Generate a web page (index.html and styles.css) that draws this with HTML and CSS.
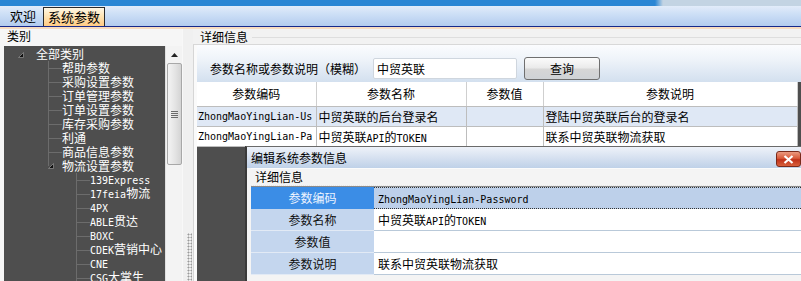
FILE: index.html
```html
<!DOCTYPE html>
<html lang="zh-CN">
<head>
<meta charset="utf-8">
<title>系统参数</title>
<link rel="stylesheet" href="styles.css">
</head>
<body>
<div class="app">
  <div class="top">
    <div class="strip"></div>
    <div class="tabs">
      <div class="tab">欢迎</div>
      <div class="tab active">系统参数</div>
    </div>
  </div>
  <div class="main">
    <div class="left">
      <div class="plabel">类别</div>
      <div class="treebox">
        <div class="tree">
          <div class="row root"><span class="exp"><svg width="6" height="6" viewBox="0 0 6 6"><path d="M5.5 0.5 L5.5 5.5 L0.5 5.5 Z" fill="#111" stroke="#8a8a8a" stroke-width="0.8"/></svg></span><span class="txt">全部类别</span></div>
          <div class="row l1"><span class="conn"></span><span class="txt">帮助参数</span></div>
          <div class="row l1"><span class="conn"></span><span class="txt">采购设置参数</span></div>
          <div class="row l1"><span class="conn"></span><span class="txt">订单管理参数</span></div>
          <div class="row l1"><span class="conn"></span><span class="txt">订单设置参数</span></div>
          <div class="row l1"><span class="conn"></span><span class="txt">库存采购参数</span></div>
          <div class="row l1"><span class="conn"></span><span class="txt">利通</span></div>
          <div class="row l1"><span class="conn"></span><span class="txt">商品信息参数</span></div>
          <div class="row l1"><span class="conn last"><svg width="6" height="6" viewBox="0 0 6 6"><path d="M5.5 0.5 L5.5 5.5 L0.5 5.5 Z" fill="#111" stroke="#8a8a8a" stroke-width="0.8"/></svg></span><span class="txt">物流设置参数</span></div>
          <div class="row l2"><span class="conn"></span><span class="txt"><span class="en">139Express</span></span></div>
          <div class="row l2"><span class="conn"></span><span class="txt"><span class="en">17feia</span>物流</span></div>
          <div class="row l2"><span class="conn"></span><span class="txt"><span class="en">4PX</span></span></div>
          <div class="row l2"><span class="conn"></span><span class="txt"><span class="en">ABLE</span>贯达</span></div>
          <div class="row l2"><span class="conn"></span><span class="txt"><span class="en">BOXC</span></span></div>
          <div class="row l2"><span class="conn"></span><span class="txt"><span class="en">CDEK</span>营销中心</span></div>
          <div class="row l2"><span class="conn"></span><span class="txt"><span class="en">CNE</span></span></div>
          <div class="row l2"><span class="conn"></span><span class="txt"><span class="en">CSG</span>大掌生</span></div>
        </div>
        <div class="vscroll">
          <div class="up"><svg width="7" height="4" viewBox="0 0 7 4"><path d="M0 4 L3.5 0 L7 4 Z" fill="#222"/></svg></div>
          <div class="thumb"><div class="grip"></div></div>
        </div>
      </div>
    </div>
    <div class="split"><div class="sgrip"></div></div>
    <div class="right">
      <div class="plabel r"><span>详细信息</span><span class="gline"></span></div>
      <div class="rbox">
        <div class="search">
          <span class="slabel">参数名称或参数说明（模糊）</span>
          <div class="input">中贸英联</div>
          <div class="btn">查询</div>
        </div>
        <div class="grid">
          <table class="dt">
            <colgroup><col class="c1"><col class="c2"><col class="c3"><col class="c4"></colgroup>
            <thead>
              <tr><th>参数编码</th><th>参数名称</th><th>参数值</th><th>参数说明</th></tr>
            </thead>
            <tbody>
              <tr class="sel"><td class="code">ZhongMaoYingLian-Us</td><td>中贸英联的后台登录名</td><td></td><td>登陆中贸英联后台的登录名</td></tr>
              <tr><td class="code">ZhongMaoYingLian-Pa</td><td>中贸英联<span class="en">API</span>的<span class="en">TOKEN</span></td><td></td><td>联系中贸英联物流获取</td></tr>
            </tbody>
          </table>
        </div>
      </div>
    </div>
  </div>

  <div class="dialog">
    <div class="dtitle">
      <span>编辑系统参数信息</span>
      <div class="close"><svg width="11" height="9" viewBox="0 0 11 9"><path d="M1.5 1 L9.5 8 M9.5 1 L1.5 8" stroke="#fff" stroke-width="2.2"/></svg></div>
    </div>
    <div class="dbody">
      <div class="glabel">详细信息</div>
      <div class="gap"></div>
      <div class="form">
        <div class="frow active"><div class="fl">参数编码</div><div class="fv"><span class="en">ZhongMaoYingLian-Password</span></div></div>
        <div class="frow"><div class="fl">参数名称</div><div class="fv">中贸英联<span class="en">API</span>的<span class="en">TOKEN</span></div></div>
        <div class="frow"><div class="fl">参数值</div><div class="fv"></div></div>
        <div class="frow"><div class="fl">参数说明</div><div class="fv">联系中贸英联物流获取</div></div>
      </div>
    </div>
  </div>
</div>
</body>
</html>
```

FILE: styles.css
```css
* { box-sizing: border-box; }
html, body { margin: 0; padding: 0; }
body {
  width: 801px;
  height: 281px;
  overflow: hidden;
  font-family: "Noto Sans CJK SC", "DejaVu Sans", sans-serif;
  font-size: 12px;
  color: #000;
  background: #f2f2f2;
}
.app { position: relative; width: 801px; height: 281px; overflow: hidden; }

.en { font-family: "DejaVu Sans Mono", "Liberation Mono", monospace; font-size: 10px; }

/* top bar */
.top { height: 27px; }
.strip {
  height: 6px;
  background: linear-gradient(to right, #2a86d4 0, #2a86d4 655px, #c3d4e3 663px, #c3d4e3 100%);
}
.tabs {
  height: 21px;
  display: flex;
  align-items: flex-end;
  padding-left: 4px;
  background: linear-gradient(to bottom, #e2ecfa 0, #cddff6 40%, #b3ccee 100%);
  border-bottom: 1px solid #17298a;
}
.tab {
  height: 19px;
  line-height: 18px;
  font-size: 13px;
  padding: 0 5px 0 6px;
}
.tab.active {
  margin-left: 2px;
  padding: 0 4px;
  border: 1px solid #2a2a2a;
  border-bottom: none;
  background: linear-gradient(to bottom, #fff8e6 0, #ffe2b0 50%, #ffcb84 100%);
}

/* main */
.main {
  display: flex;
  height: 254px;
  border-top: 2px solid #f7dcc0;
}
.plabel {
  height: 15px;
  line-height: 14px;
  padding-left: 7px;
  font-size: 12px;
}
.plabel.r { display: flex; align-items: center; }
.gline { flex: 1; height: 1px; background: #dedede; margin-left: 4px; margin-top: 1px; }

.left { width: 182px; background: #f6f6f6; }
.treebox {
  display: flex;
  margin: 2px 0 0 4px;
  height: 240px;
}
.tree {
  width: 161px;
  background: #4e4e4e;
  color: #fff;
  padding-top: 0;
  overflow: hidden;
}
.row {
  display: flex;
  align-items: center;
  height: 14px;
  white-space: nowrap;
  line-height: 14px;
}
.row.root { height: 15px; padding-left: 14px; }
.exp { width: 18px; display: flex; align-items: center; padding-top: 3px; }
.row.root .txt { margin-left: 0; }
.row.l1 { padding-left: 44px; }
.row.l2 { padding-left: 72px; }
.conn {
  width: 14px;
  height: 100%;
  flex: none;
  background:
    linear-gradient(#6c6c6c, #6c6c6c) left top / 1px 100% no-repeat,
    linear-gradient(#6c6c6c, #6c6c6c) left center / 100% 1px no-repeat;
}
.conn.last {
  display: flex;
  align-items: center;
  padding-left: 0;
  background:
    linear-gradient(#6c6c6c, #6c6c6c) left top / 1px 50% no-repeat;
}
.row.l2 .conn { background:
    linear-gradient(#6c6c6c, #6c6c6c) left top / 1px 100% no-repeat,
    linear-gradient(#6c6c6c, #6c6c6c) left center / 100% 1px no-repeat; }
.txt { font-size: 12px; }

.vscroll {
  width: 17px;
  background: #f3f3f3;
  border-left: 1px solid #e0e0e0;
  display: flex;
  flex-direction: column;
  align-items: center;
}
.up { height: 17px; display: flex; align-items: center; justify-content: center; }
.thumb {
  width: 15px;
  height: 102px;
  border: 1px solid #a8a8a8;
  border-radius: 2px;
  background: linear-gradient(to right, #f4f4f4, #e2e2e2 60%, #d4d4d4);
  display: flex;
  align-items: center;
  justify-content: center;
}
.grip {
  width: 7px;
  height: 7px;
  background: repeating-linear-gradient(to bottom, #6a6a6a 0, #6a6a6a 1px, transparent 1px, transparent 2px);
}

.split {
  width: 11px;
  background: #f0f0f0;
  display: flex;
  flex-direction: column;
  justify-content: flex-end;
  align-items: center;
  border-left: 1px solid #f8f8f8;
}
.sgrip {
  width: 5px;
  height: 48px;
  margin-left: 3px;
  background: radial-gradient(circle, #9a9a9a 0.8px, transparent 1.2px) 0 0 / 3px 3px;
}

.right { width: 608px; background: #f2f2f2; }
.rbox {
  height: 237px;
  border-top: 1px solid #d8d8d8;
  border-left: 1px solid #d6d6d6;
  padding-left: 3px;
  background: #fafafa;
}
.search {
  height: 37px;
  display: flex;
  align-items: center;
  padding: 9px 0 0 13px;
  background: linear-gradient(to bottom, #fbfcfe 0, #eef3f9 40%, #d3e0ef 100%);
}
.slabel { width: 156px; }
.input {
  width: 144px;
  height: 21px;
  margin-left: 7px;
  background: #fff;
  border: 1px solid #cfd6de;
  border-radius: 2px;
  padding-left: 3px;
  line-height: 19px;
}
.btn {
  width: 76px;
  height: 23px;
  margin-left: 7px;
  border: 1px solid #6f6f6f;
  border-radius: 3px;
  background: linear-gradient(to bottom, #fbfbfb 0, #ebebeb 45%, #d6d6d6 55%, #cfd2d6 100%);
  text-align: center;
  line-height: 21px;
}

.grid { height: 200px; background: #4e4e4e; }
.dt {
  width: 600px;
  border-collapse: collapse;
  table-layout: fixed;
  background: #fff;
}
.c1 { width: 119px; }
.c2 { width: 150px; }
.c3 { width: 77px; }
.c4 { width: 254px; }
.dt th {
  height: 24px;
  font-weight: normal;
  text-align: center;
  border-right: 1px solid #cfcfcf;
  border-bottom: 1px solid #bdbdbd;
  padding: 0;
  background: #fff;
}
.dt td {
  height: 20px;
  padding: 0 0 0 2px;
  border-right: 1px solid #bdbdbd;
  border-bottom: 1px solid #bdbdbd;
  white-space: nowrap;
  overflow: hidden;
}
.dt td.code { font-family: "DejaVu Sans Mono", "Liberation Mono", monospace; font-size: 10px; padding-left: 1px; }
.dt tr.sel td { background: #dfe8f5; }

/* dialog window */
.dialog {
  position: absolute;
  left: 245px;
  top: 146px;
  width: 570px;
  height: 140px;
  border-left: 2px solid #3a3a3a;
  border-top: 1px solid #6a6a6a;
  background: #f0f0f0;
}
.dtitle {
  height: 21px;
  display: flex;
  align-items: center;
  padding-left: 4px;
  background: linear-gradient(to bottom, #eef2f9 0, #d9e3f1 45%, #bfd1e8 100%);
}
.close {
  margin-left: auto;
  margin-right: 14px;
  width: 25px;
  height: 16px;
  border: 1px solid #7a2a1a;
  border-radius: 3px;
  background: linear-gradient(to bottom, #eb9a80 0, #d85a3a 45%, #c0321a 55%, #d8603c 100%);
  display: flex;
  align-items: center;
  justify-content: center;
  margin-top: 3px;
}
.dbody { padding-left: 4px; background: #f4f4f4; height: 118px; }
.glabel {
  height: 17px;
  line-height: 16px;
  padding-left: 4px;
  border-top: 1px solid #fbfbfb;
}
.gap {
  height: 2px;
  background: repeating-linear-gradient(to right, #e6e6e6 0, #e6e6e6 1px, #f4f4f4 1px, #f4f4f4 2px);
  border-bottom: 1px solid #8a8a8a;
}
.form { background: #fff; }
.frow { display: flex; height: 22px; }
.fl {
  width: 123px;
  flex: none;
  background: #c4d6ee;
  text-align: center;
  line-height: 21px;
  border-bottom: 1px solid #e2eaf5;
  color: #111;
}
.fv {
  flex: 1;
  padding-left: 4px;
  line-height: 21px;
  border-bottom: 1px solid #b9c9d9;
  white-space: nowrap;
}
.frow.active .fl { background: #3b8de6; color: #eef4ff; border-bottom-color: #3b8de6; }
.frow.active .fv {
  background: #bdd0ea;
  border-top: 1px dotted #333;
  border-bottom: 1px dotted #333;
  line-height: 19px;
}
```
